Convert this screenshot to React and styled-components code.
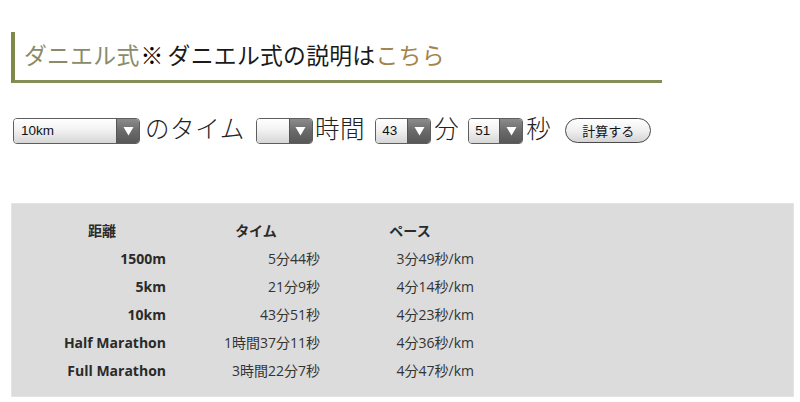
import React from "react";
import styled, { createGlobalStyle } from "styled-components";

const Global = createGlobalStyle`
  html, body { margin: 0; padding: 0; background: #fff; }
  body { font-family: "Noto Sans CJK JP", "Liberation Sans", sans-serif; color: #222; }
`;

const Page = styled.div`
  width: 800px;
  height: 402px;
  padding: 32px 6px 0 11px;
  box-sizing: border-box;
`;

const Heading = styled.h2`
  margin: 0;
  width: 651px;
  height: 51px;
  box-sizing: border-box;
  border-left: 4px solid #7e8a4c;
  border-bottom: 3px solid #848f57;
  padding: 0 0 4px 9px;
  display: flex;
  align-items: center;
  font-size: 22.8px;
  font-weight: 400;
  letter-spacing: 0.3px;
  color: #1a1a1a;
  font-family: "Noto Sans CJK JP", sans-serif;
`;

const Accent = styled.span`
  color: ${(p) => p.$color};
`;

const Mark = styled.span`
  font-weight: 700;
  color: #000;
  margin: 0 4px 0 1px;
`;

const FormRow = styled.div`
  display: flex;
  align-items: center;
  margin-top: 34px;
  margin-left: 2px;
  height: 27px;
`;

const SelectBox = styled.div`
  display: flex;
  width: ${(p) => p.$w}px;
  height: 26px;
  box-sizing: border-box;
  border: 1px solid #5e5e5e;
  border-radius: 4px;
  overflow: hidden;
  flex-shrink: 0;
`;

const SelectValue = styled.div`
  flex: 1;
  background: linear-gradient(#ffffff, #f2f2f2 45%, #d6d6d6);
  font-family: "Liberation Sans", Arial, sans-serif;
  font-size: 13.5px;
  color: #111;
  display: flex;
  align-items: center;
  padding-left: ${(p) => p.$pad}px;
`;

const SelectArrow = styled.div`
  width: 22px;
  border-left: 1px solid #555;
  background: linear-gradient(#8c8c8c, #6a6a6a 50%, #575757);
  display: flex;
  align-items: center;
  justify-content: center;
`;

const Label = styled.span`
  font-size: 24.5px;
  font-weight: 300;
  letter-spacing: 0.6px;
  color: #222;
  margin: 0 ${(p) => p.$r}px 0 ${(p) => p.$l}px;
  line-height: 1;
  position: relative;
  top: -2px;
  white-space: nowrap;
`;

const Button = styled.button`
  height: 25px;
  width: 86px;
  margin-left: 3px;
  border: 1px solid #4a4a4a;
  border-radius: 13px;
  background: linear-gradient(#ffffff, #f0f0f0 50%, #d4d4d4);
  font-family: "Noto Sans CJK JP", sans-serif;
  font-size: 13px;
  color: #111;
  padding: 0;
  display: flex;
  align-items: center;
  justify-content: center;
`;

const Results = styled.div`
  margin-top: 59px;
  width: 783px;
  height: 194px;
  box-sizing: border-box;
  background: #dcdcdc;
  border: 1px solid #e4e4e4;
  padding: 12px 0 0 26px;
`;

const Table = styled.div`
  display: grid;
  grid-template-columns: 128px 128px 128px;
  column-gap: 26px;
  grid-auto-rows: 28px;
  font-family: "Open Sans", "Noto Sans CJK JP", sans-serif;
  font-size: 14px;
  color: #333;
`;

const Th = styled.div`
  font-weight: 700;
  text-align: center;
  display: flex;
  align-items: center;
  justify-content: center;
  font-family: "Noto Sans CJK JP", sans-serif;
  color: #2a2a2a;
`;

const Td = styled.div`
  display: flex;
  align-items: center;
  justify-content: flex-end;
  font-weight: ${(p) => (p.$bold ? 700 : 400)};
  color: ${(p) => (p.$bold ? "#2a2a2a" : "#333")};
  white-space: nowrap;
`;

const Tri = () => (
  <svg width="11" height="10" viewBox="0 0 11 10">
    <path d="M0.5 1 L10.5 1 L5.5 9.5 Z" fill="#fff" />
  </svg>
);

const Select = ({ w, value, pad = 7 }) => (
  <SelectBox $w={w}>
    <SelectValue $pad={pad}>{value}</SelectValue>
    <SelectArrow>
      <Tri />
    </SelectArrow>
  </SelectBox>
);

const rows = [
  ["1500m", "5分44秒", "3分49秒/km"],
  ["5km", "21分9秒", "4分14秒/km"],
  ["10km", "43分51秒", "4分23秒/km"],
  ["Half Marathon", "1時間37分11秒", "4分36秒/km"],
  ["Full Marathon", "3時間22分7秒", "4分47秒/km"],
];

export default function App() {
  return (
    <>
      <Global />
      <Page>
        <Heading>
          <Accent $color="#8b8b69">ダニエル式</Accent>
          <Mark>※</Mark>
          ダニエル式の説明は
          <Accent $color="#a4844a">こちら</Accent>
        </Heading>
        <FormRow>
          <Select w={127} value="10km" />
          <Label $l={5} $r={11}>のタイム</Label>
          <Select w={57} value="" />
          <Label $l={2} $r={10}>時間</Label>
          <Select w={56} value="43" pad={6} />
          <Label $l={3} $r={9}>分</Label>
          <Select w={55} value="51" pad={6} />
          <Label $l={3} $r={11}>秒</Label>
          <Button>計算する</Button>
        </FormRow>
        <Results>
          <Table>
            <Th>距離</Th>
            <Th>タイム</Th>
            <Th>ペース</Th>
            {rows.map((r) => (
              <React.Fragment key={r[0]}>
                <Td $bold>{r[0]}</Td>
                <Td>{r[1]}</Td>
                <Td>{r[2]}</Td>
              </React.Fragment>
            ))}
          </Table>
        </Results>
      </Page>
    </>
  );
}
